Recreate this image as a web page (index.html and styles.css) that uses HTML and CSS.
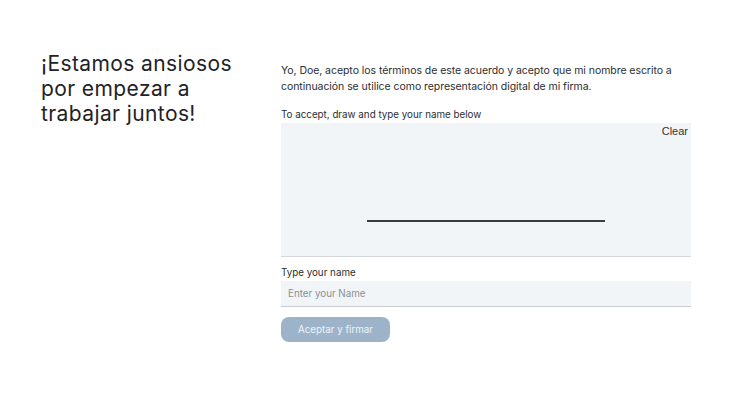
FILE: index.html
```html
<!DOCTYPE html>
<html>
<head>
<meta charset="utf-8">
<link rel="stylesheet" href="styles.css">
</head>
<body>
<div class="page">
  <div class="left">
    <h1 class="title">¡Estamos ansiosos por empezar a trabajar juntos!</h1>
  </div>
  <div class="right">
    <p class="terms">Yo, Doe, acepto los términos de este acuerdo y acepto que mi nombre escrito a continuación se utilice como representación digital de mi firma.</p>
    <div class="label">To accept, draw and type your name below</div>
    <div class="sigbox">
      <span class="clear">Clear</span>
      <div class="sigline"></div>
    </div>
    <div class="label label2">Type your name</div>
    <div class="input">Enter your Name</div>
    <button class="btn">Aceptar y firmar</button>
  </div>
</div>
</body>
</html>
```

FILE: styles.css
```css
* { box-sizing: border-box; }
body {
  margin: 0;
  background: #fff;
  font-family: Inter, "Noto Sans", sans-serif;
  color: #1f2328;
}
.page {
  display: flex;
  padding: 51px 59px 0 41px;
}
.left { width: 240px; }
.title {
  margin: 0;
  max-width: 210px;
  font-weight: 400;
  font-size: 21px;
  line-height: 25px;
  color: #1f2226;
  letter-spacing: 0.4px;
}
.right {
  width: 410px;
  padding-top: 12px;
}
.terms {
  margin: 0;
  font-size: 10.5px;
  line-height: 16px;
  color: #2a2d31;
  letter-spacing: -0.05px;
}
.label {
  font-size: 9.8px;
  line-height: 14px;
  margin-top: 13px;
  color: #2a2d31;
}
.sigbox {
  position: relative;
  height: 134px;
  background: #f2f5f8;
  border-bottom: 1.5px solid #d3d6da;
  margin-top: 1px;
  display: flex;
  justify-content: center;
}
.clear {
  position: absolute;
  top: 2px;
  right: 3px;
  font-family: "Liberation Sans", Arial, sans-serif;
  font-size: 11px;
  color: #333;
}
.sigline {
  margin-top: 97px;
  width: 238px;
  height: 2px;
  background: #3a3d42;
}
.label2 { margin-top: 9px; }
.input {
  margin-top: 1px;
  height: 26px;
  background: #f2f5f8;
  border-bottom: 1px solid #c9ccd0;
  padding: 6px 7px;
  font-size: 9.8px;
  line-height: 14px;
  color: #8a8f96;
}
.btn {
  display: block;
  margin-top: 10px;
  width: 109px;
  height: 25px;
  border: none;
  border-radius: 8px;
  background: #9db3c9;
  color: #eef3f8;
  font-family: inherit;
  font-size: 9.8px;
  padding: 0;
}
```
